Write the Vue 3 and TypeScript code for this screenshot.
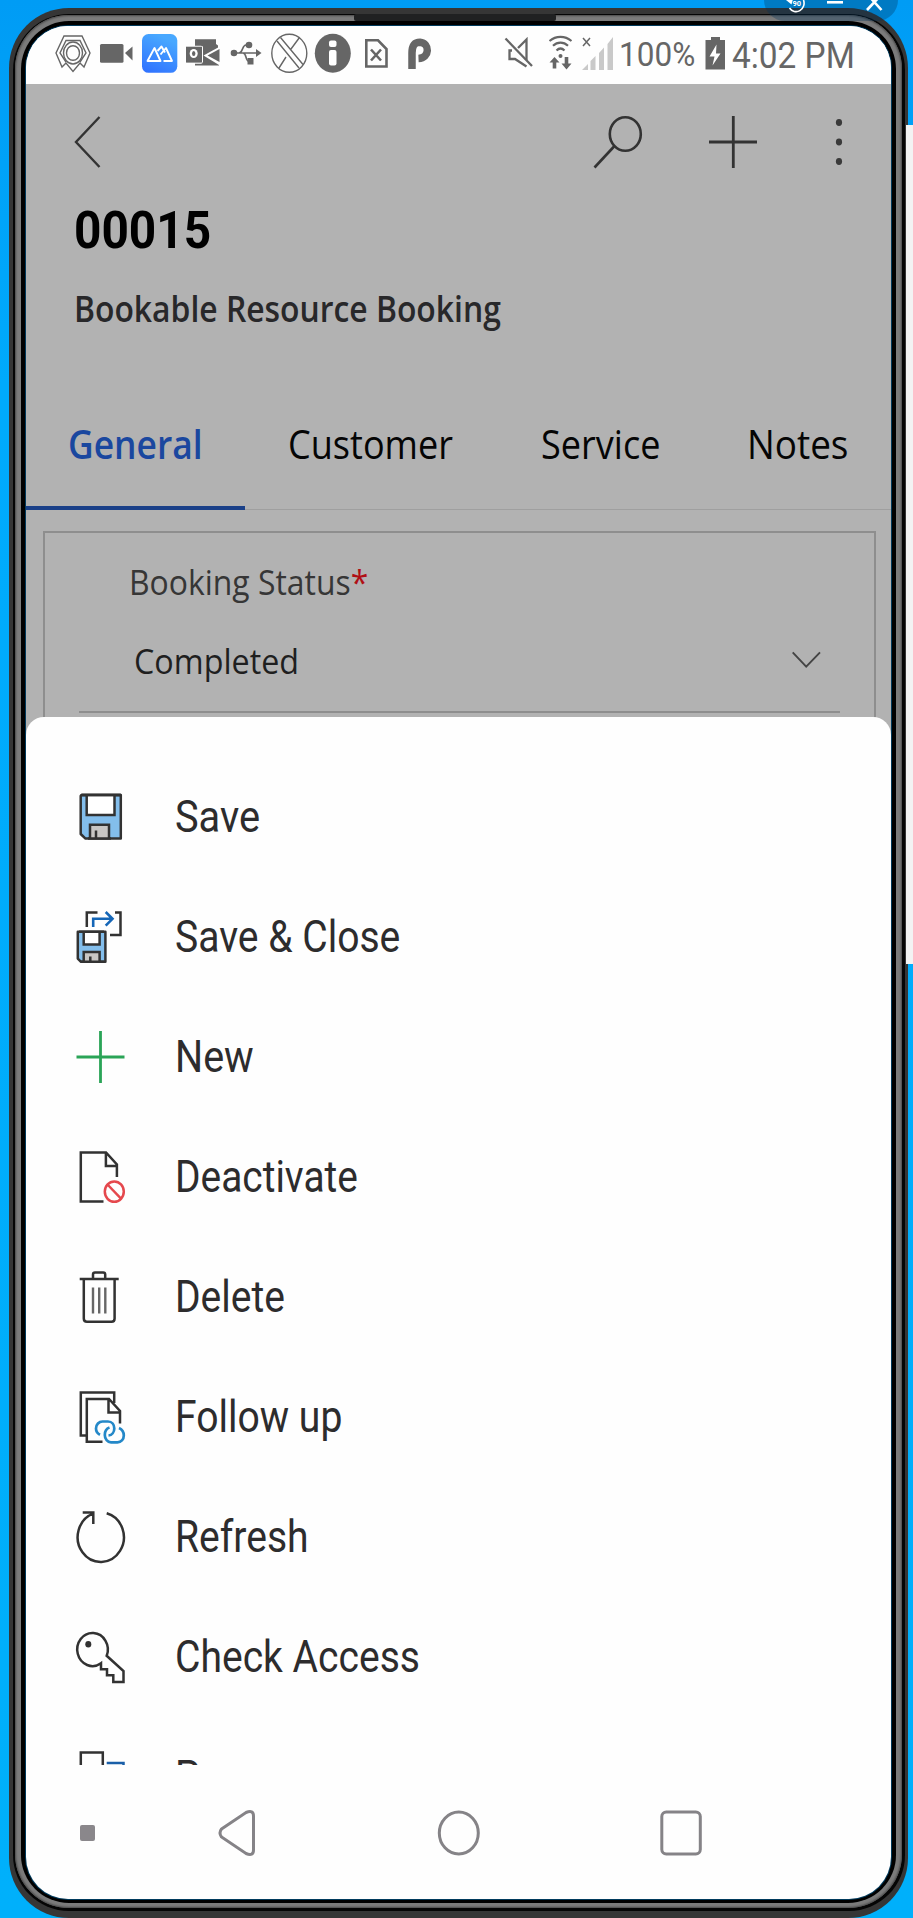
<script setup lang="ts">
import { nextTick } from 'vue'

type IconName =
  | 'save' | 'saveClose' | 'new' | 'deactivate' | 'delete'
  | 'followUp' | 'refresh' | 'checkAccess' | 'process'

interface Command {
  label: string
  icon: IconName
  width: number
}

const commands: Command[] = [
  { label: 'Save', icon: 'save', width: 85 },
  { label: 'Save & Close', icon: 'saveClose', width: 225.500 },
  { label: 'New', icon: 'new', width: 79 },
  { label: 'Deactivate', icon: 'deactivate', width: 183 },
  { label: 'Delete', icon: 'delete', width: 110 },
  { label: 'Follow up', icon: 'followUp', width: 167 },
  { label: 'Refresh', icon: 'refresh', width: 134 },
  { label: 'Check Access', icon: 'checkAccess', width: 245 },
  { label: 'Process', icon: 'process', width: 142 },
]

const tabs = [
  { label: 'General', width: 134.500, active: true },
  { label: 'Customer', width: 165, active: false },
  { label: 'Service', width: 119, active: false },
  { label: 'Notes', width: 101.500, active: false },
]

// Condenses a line of text horizontally to the given width.
const vFit = {
  mounted(el: HTMLElement, binding: { value: number }) {
    nextTick(() => {
      el.style.transform = `scaleX(${binding.value / el.offsetWidth})`
    })
  },
}
</script>

<template>
  <div class="desktop">
    <div class="side-window"></div>
    <div class="window-controls">
      <svg width="134" height="21" viewBox="764 0 134 21" fill="none" stroke="#fff">
        <path d="M803.500 0A8 8.500 0 0 1 789.500 8" stroke-width="1.600" />
        <path d="M786 0L791.500 4.500L793 -1Z" fill="#fff" stroke="none" />
        <text x="792.500" y="5.500" font-size="7.500" font-weight="700" font-family="Roboto" fill="#fff" stroke="none">90</text>
        <path d="M827 2.300H843" stroke-width="2.600" />
        <path d="M867 -6L881.500 10M882 -6L867 10" stroke-width="2.600" />
      </svg>
    </div>
    <div class="shell"><div class="rim"><div class="metal"><div class="bezel">
      <div class="screen">
        <header class="status">
          <svg class="status-left" width="400" height="58" viewBox="26 26 400 58" fill="none" stroke="#666" stroke-width="1.400">
            <path d="M64 36H82L90 53L84 67L80 63L73 71.500L66 63L62 67L56 53ZM66 62L60 53L66 40.500H80L86 53L80 62" />
            <ellipse cx="73" cy="53" rx="9.500" ry="11" />
            <ellipse cx="73" cy="53" rx="6.500" ry="7.300" />
            <g fill="#666" stroke="none">
              <rect x="100" y="44" width="23.500" height="18.700" rx="1.500" />
              <path d="M125 53L132.500 46.500V60.500Z" />
            </g>
            <defs>
              <linearGradient id="peaks-fill" x1="0" y1="1" x2="0.400" y2="0">
                <stop offset="0" stop-color="#2f6fff" /><stop offset="1" stop-color="#48a8ff" />
              </linearGradient>
            </defs>
            <rect x="142" y="34" width="35.300" height="38.800" rx="6.500" fill="url(#peaks-fill)" stroke="none" />
            <g stroke="#fff" stroke-width="1.900" stroke-linejoin="round">
              <path d="M147.500 61H160.500L154.500 48Z" />
              <path d="M157.500 51L161.500 46.500L165 52.500" />
              <path d="M160.500 54.500L166 48L172 61H163.500" />
            </g>
            <g stroke="none" fill="#666">
              <path d="M195 39.300H216V44L218 45.500V50L207 55.500L219 62V65.500H195V62H203V46.500H195Z" />
              <path d="M203.500 55.500L219 47V65Z" fill="#fff" />
              <path d="M207.500 55.500L219.500 49V62Z" />
              <rect x="185.500" y="46.500" width="16.500" height="16.500" rx="1" stroke="#fff" stroke-width="1.500" />
              <rect x="187" y="47.700" width="14" height="13.800" fill="none" stroke="#666" stroke-width="2" />
              <ellipse cx="193.700" cy="53.500" rx="4" ry="4.600" fill="#fff" />
              <ellipse cx="193.700" cy="53.500" rx="1.700" ry="2.500" />
            </g>
            <g stroke-width="1.700">
              <path d="M234 53H257M239 53C243 53 242 45 246 45H248M243 53C247 53 245 61.300 249 61.300" />
              <g fill="#666" stroke="none">
                <circle cx="234" cy="53" r="3.300" /><path d="M256 49L261.500 53L256 57Z" />
                <circle cx="249" cy="45" r="3.300" /><rect x="247.500" y="58" width="6" height="6.500" />
              </g>
            </g>
            <ellipse cx="289.300" cy="53.300" rx="17.500" ry="19" />
            <path d="M277 41L299 68M280.500 37.500L303 64.500M299.500 37.500L291 49M286 57L279 68" />
            <ellipse cx="332.800" cy="53.300" rx="18" ry="19.500" fill="#666" stroke="none" />
            <g fill="#fff" stroke="none"><rect x="329" y="40.500" width="7.500" height="6.500" rx="2" /><rect x="329" y="50" width="7.500" height="15.500" rx="2" /></g>
            <path d="M366.300 40.300H378L386.500 49V66.500H366.300Z" stroke-width="2.600" />
            <path d="M371 49.500L381 60.500M381 49.500L371 60.500" stroke-width="2.600" />
            <path d="M412 69V53C412 45 415 42.200 420 42.200C430 43 430 58 418.500 58.500" stroke-width="7.500" />
          </svg>
          <svg class="status-radio" width="117" height="58" viewBox="500 26 117 58" fill="none" stroke="#666">
            <path d="M505.500 38.500L532 66" stroke-width="2.300" />
            <path d="M518 48L526.500 39.500V60M512 50.500H509.500V59H515L526.500 66.500" stroke-width="2.300" />
            <path d="M549.500 41C556 35.500 565 35.500 571.500 41M553 45.700C557.500 41.500 563.500 41.500 568 45.700M556.500 50.500C559 48 562 48 564.500 50.500" stroke-width="2.200" />
            <circle cx="560.500" cy="56" r="2" fill="#666" stroke="none" />
            <path d="M554.500 68.500V60M566.500 57V66" stroke-width="3.600" />
            <path d="M549.500 62.500L554.500 57L559.500 62.500ZM561.500 63.500L566.500 69.500L571.500 63.500Z" fill="#666" stroke="none" />
            <path d="M583 38L590 46M590 38L583 46" stroke-width="1.500" />
            <g fill="#c9c9c9" stroke="none">
              <path d="M582 70L588 64V70ZM590.500 61L595.500 56V70H590.500ZM599 53L604 47.500V70H599ZM607.500 44L613 37V70H607.500Z" />
            </g>
          </svg>
          <span class="battery-text"><span v-fit="76" class="fit">100%</span></span>
          <svg class="battery" width="22" height="58" viewBox="704 26 22 58" fill="#666">
            <path d="M711 37H720V40H725V69.500H705.500V40H711Z" />
            <path d="M716.500 44.500L709.500 56.500H714.500L712.500 65.500L720.500 53.500H716Z" fill="#fff" />
          </svg>
          <span class="clock"><span v-fit="122.5" class="fit">4:02 PM</span></span>
        </header>

        <main class="record">
          <div class="toolbar">
            <svg width="35" height="60" viewBox="70 112 35 60" fill="none" stroke="#333" stroke-width="2.400">
              <path d="M99.500 117L76 142L99.500 167" />
            </svg>
            <svg class="search" width="60" height="60" viewBox="590 112 60 60" fill="none" stroke="#333" stroke-width="2.600">
              <ellipse cx="625.300" cy="134" rx="15.500" ry="16.800" /><path d="M614.500 146L594.500 167.500" />
            </svg>
            <svg class="add" width="60" height="60" viewBox="703 112 60 60" stroke="#333" stroke-width="2.800">
              <path d="M709 142H757M733.300 116V168" />
            </svg>
            <svg class="more" width="12" height="60" viewBox="833 112 12 60" fill="#3a3a3a">
              <ellipse cx="839" cy="122.500" rx="3.100" ry="3.400" /><ellipse cx="839" cy="142" rx="3.100" ry="3.400" /><ellipse cx="839" cy="161.500" rx="3.100" ry="3.400" />
            </svg>
          </div>
          <h1><span v-fit="137" class="fit">00015</span></h1>
          <h2><span v-fit="427" class="fit">Bookable Resource Booking</span></h2>
          <nav class="tabs">
            <div v-for="tab in tabs" :key="tab.label" :class="['tab', tab.label.toLowerCase(), { active: tab.active }]">
              <span v-fit="tab.width" class="fit">{{ tab.label }}</span>
            </div>
          </nav>
          <section class="card">
            <div class="field-label"><span v-fit="239" class="fit">Booking Status<span class="required">*</span></span></div>
            <div class="field-value">
              <span v-fit="165.5" class="fit">Completed</span>
              <svg width="32" height="20" viewBox="789 650 32 20" fill="none" stroke="#444" stroke-width="1.900">
                <path d="M791.700 652.300L805.200 666.700L819 652.300" />
              </svg>
            </div>
          </section>
        </main>

        <section class="sheet">
          <ul class="commands">
            <li v-for="cmd in commands" :key="cmd.label">
              <svg width="49" height="52" viewBox="0 0 49 52" fill="none" stroke="#323232" stroke-width="2.500">
                <g v-if="cmd.icon === 'save'">
                  <path d="M5.500 4H44.800V47.600H9.500L4.700 43V4.800Z" fill="#83beec" stroke-linejoin="round" />
                  <path d="M10.700 4V24H38.500V4" fill="#fff" />
                  <path d="M5.500 4H44.800" />
                  <path d="M14 47.600V33.700H33V47.600" fill="#c8c6c4" />
                  <path d="M5.500 4H44.800M12 47.600H35" />
                  <path d="M20 39.500V47" />
                </g>
                <g v-else-if="cmd.icon === 'saveClose'">
                  <path d="M10.800 16V1.500H21.500M39 1.500H44.500V24H34" />
                  <path d="M17.200 16V7.800H36.500M29.700 1L36.500 7.800L29.700 14.600" stroke="#1566b7" stroke-width="2.600" />
                  <path d="M1.800 20.800H29.400V50.800H5L1.800 47.600Z" fill="#83beec" stroke-linejoin="round" />
                  <path d="M7.700 20.800V33.500H23.600V20.800" fill="#fff" />
                  <path d="M7.700 50.800V41H23.600V50.800" fill="#c8c6c4" />
                  <path d="M3 20.800H28M5 50.800H28M14.300 45.500V50" />
                </g>
                <path v-else-if="cmd.icon === 'new'" d="M.5 26H48.500M24.500 0V52" stroke="#2aa457" stroke-width="2.800" />
                <g v-else-if="cmd.icon === 'deactivate'">
                  <path d="M27.500 50.600H4.800V1.400H30L40.900 13.500V26M29.900 1.400V15H41" />
                  <ellipse cx="38.300" cy="40.600" rx="9.500" ry="10.200" stroke="#e5484d" />
                  <path d="M31.500 33.500L45 47.700" stroke="#e5484d" />
                </g>
                <g v-else-if="cmd.icon === 'delete'">
                  <path d="M3.700 8H42.700M17 8V3.500Q17 1.400 19 1.400H27.200Q29.200 1.400 29.200 3.500V8M7.800 8V47.500Q7.800 50.800 11 50.800H35.500Q38.600 50.800 38.600 47.500V8" />
                  <path d="M17 16.600V42.600M23.200 16.600V42.600M29.300 16.600V42.600" stroke="#666" stroke-width="2.400" />
                </g>
                <g v-else-if="cmd.icon === 'followUp'">
                  <path d="M10.500 44.500H4.800V1.400H38.200V12M26.500 50.800H10.800V8H33L44 20V32.500M32.500 8V21.500H44" />
                  <path d="M24 43.800C21.500 42.500 20 40.500 20 37.500C20 33.500 23 30.500 26.500 30.500H32C36 30.500 38.300 33.800 38.300 37.500C38.300 41 36 44.200 32.500 44.500M33.500 36.500C30.500 37.500 28.800 40.500 28.800 44C28.800 48 31.500 51.300 35 51.300H41.500C45 51.300 47.800 48.500 47.800 44.500C47.800 41 46 38.300 43 37" stroke="#2488c8" stroke-width="2.700" />
                </g>
                <path v-else-if="cmd.icon === 'refresh'" d="M30.700 2.200A23.100 24.800 0 1 1 17.300 2.700M6.700 1.400H17.300V13" />
                <g v-else-if="cmd.icon === 'checkAccess'">
                  <path d="M25 32.300A15.300 16.500 0 1 1 30.700 24.800L47.500 40V51H37.300V44.300H31V38.300H25Z" />
                  <ellipse cx="12.300" cy="13.200" rx="3" ry="3.300" fill="#323232" stroke="none" />
                </g>
                <g v-else>
                  <path d="M4.800 20V1.400H26.800V20" />
                  <path d="M30.700 12H47.500V22" stroke="#1a5fa8" />
                </g>
              </svg>
              <span v-fit="cmd.width" class="fit">{{ cmd.label }}</span>
            </li>
          </ul>
        </section>

        <footer class="navbar">
          <svg width="865" height="60" viewBox="26 1803 865 60" fill="none" stroke="#858387" stroke-width="3">
            <rect x="80" y="1825" width="15" height="16" rx="2" fill="#8a878b" stroke="none" />
            <path d="M221.500 1829L246 1812.500Q253.500 1809.500 253.500 1816V1850Q253.500 1856.500 246 1853.500L221.500 1837Q218.500 1833 221.500 1829Z" />
            <ellipse cx="458.800" cy="1833" rx="19.500" ry="21" />
            <rect x="661.800" y="1812" width="38.500" height="42" rx="4.500" />
          </svg>
        </footer>
      </div>
    </div></div></div></div>
    <div class="speaker"></div>
  </div>
</template>

<style>
html, body { margin: 0; overflow: hidden; }
</style>

<style scoped>
* { box-sizing: border-box; }
.desktop {
  position: relative;
  width: 913px;
  height: 1918px;
  padding: 8px 5px 0 9px;
  overflow: hidden;
  background: linear-gradient(180deg, #009cf5 0%, #00aafc 20%, #00b0fb 100%);
}
.side-window { position: absolute; z-index: 2; right: 0; top: 125px; width: 7px; height: 839px; background: #f3f3f3; }
.window-controls { position: absolute; left: 764px; top: 0; height: 21px; width: 134px; z-index: 2; border-radius: 0 0 24px 24px; background: rgba(0, 50, 90, 0.32); }
.window-controls svg { display: block; }
.speaker { position: absolute; left: 354px; top: 14px; width: 202px; height: 7px; border-radius: 2px; background: #202122; }
.shell { width: 899px; height: 1910px; padding: 6px 3px 7px 4px; border-radius: 60px; background: #363636; }
.rim { height: 100%; padding: 1px 3px 3px 2px; border-radius: 56px; background: #050505; }
.metal { height: 100%; padding: 6px 6px 5px; border-radius: 54px; background: #7b7b7b; box-shadow: inset 0 0 2px 1px #4a4a4a; }
.bezel { height: 100%; padding: 5px 5px 4px; border-radius: 48px; background: #000; }
.screen { display: flex; flex-direction: column; height: 100%; overflow: hidden; border-radius: 42px; background: #fefefe; box-shadow: 0 0 0 1px #003a5c; }
svg { display: block; flex: none; overflow: visible; }
.fit { display: inline-block; white-space: nowrap; transform-origin: 0 50%; }

.status { display: flex; flex: none; height: 58px; color: #666; font-family: Roboto, sans-serif; background: #fefefe; }
.status-radio { margin-left: 74px; }
.battery-text { width: 74px; margin-left: 2px; font-size: 34px; line-height: 57px; }
.battery { margin-left: 11px; }
.clock { width: 125px; margin-left: 6px; font-size: 36.500px; line-height: 59px; }

.record { display: flex; flex: none; flex-direction: column; height: 633px; background: #b2b2b2; overflow: hidden; font-family: "Open Sans", "Noto Sans", sans-serif; }
.toolbar { display: flex; flex: none; height: 60px; margin: 28px 0 0 44px; }
.search { margin-left: 485px; }
.add { margin-left: 53px; }
.more { margin-left: 70px; }
h1 { flex: none; height: 60px; margin: 29px 0 0 48px; color: #000; font: 700 52px/60px Roboto, sans-serif; }
h2 { flex: none; height: 50px; margin: 22px 0 0 48px; color: #28282a; font-size: 35.500px; font-weight: 600; line-height: 50px; }
.tabs { display: flex; flex: none; height: 125px; margin-top: 52px; border-bottom: 1px solid #9f9f9f; color: #050505; font-size: 40px; line-height: 117px; }
.tab { flex: none; height: 125px; }
.general { width: 218.500px; padding-left: 42px; }
.customer { width: 249px; padding-left: 43px; }
.service { width: 210px; padding-left: 47px; }
.notes { padding-left: 43px; }
.active { color: #1a479f; font-weight: 600; border-bottom: 4px solid #1a4088; }
.card { flex: none; height: 220px; margin: 21px 15px 0 17px; padding: 23px 34px 0 34px; border: 2px solid #8e8e8e; }
.field-label { display: flex; height: 50px; padding-left: 50px; color: #363636; font-size: 35.500px; line-height: 50px; }
.required { color: #b01015; }
.field-value { display: flex; justify-content: space-between; height: 107px; padding: 29px 18px 0 55px; border-bottom: 2px solid #8e8e8e; color: #1f1f1f; font-size: 35.500px; line-height: 50px; }
.field-value svg { margin-top: 15px; }

.sheet { position: relative; flex: none; height: 1048px; overflow: hidden; border-radius: 18px 18px 0 0; background: #fefefe; box-shadow: 0 0 0 20px #b2b2b2; clip-path: inset(0); }
.commands { margin: 0; padding: 40px 0 0; list-style: none; color: #2d2c2d; font: 44px/120px Roboto, sans-serif; }
.commands li { display: flex; align-items: center; height: 120px; padding-left: 50px; }
.commands li .fit { margin-left: 50px; }
.navbar { flex: 1; padding-top: 38px; }
</style>
